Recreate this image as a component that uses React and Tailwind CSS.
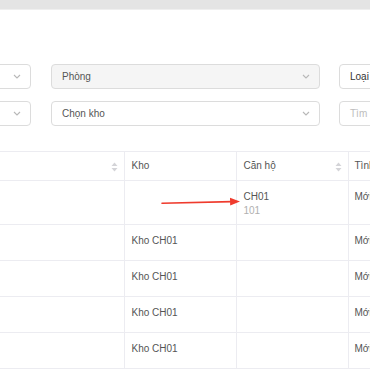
import React from 'react';

function Chevron() {
  return (
    <svg className="w-[8px] h-[5px]" viewBox="0 0 8 5" fill="none" stroke="#b8b8b8" strokeWidth="1.1">
      <path d="M1 1l3 3 3-3" />
    </svg>
  );
}

function SortIcon() {
  return (
    <svg className="absolute right-[6px] top-[10px] w-[7px] h-[10px]" viewBox="0 0 7 10" fill="#d4d4d8">
      <path d="M3.5 0.5L6.5 4H0.5z" />
      <path d="M3.5 9.5L6.5 6H0.5z" />
    </svg>
  );
}

function Select({ className, text, disabled }) {
  return (
    <div
      className={`h-[25px] shrink-0 flex items-center justify-between rounded-[4px] border border-[#dcdcdc] pl-[10px] pr-[9px] ${
        disabled ? 'bg-[#f5f5f5]' : 'bg-white'
      } ${className}`}
    >
      <span className="text-[#555]">{text}</span>
      <Chevron />
    </div>
  );
}

const rows = [
  { kho: '', can: 'CH01', sub: '101', tinh: 'Mới', first: true },
  { kho: 'Kho CH01', can: '', tinh: 'Mới' },
  { kho: 'Kho CH01', can: '', tinh: 'Mới' },
  { kho: 'Kho CH01', can: '', tinh: 'Mới' },
  { kho: 'Kho CH01', can: '', tinh: 'Mới' },
];

export default function App() {
  return (
    <div
      className="relative w-[370px] h-[370px] overflow-hidden bg-white text-[10px] leading-[14px]"
      style={{ fontFamily: '"Liberation Sans", Arial, sans-serif' }}
    >
      <div className="h-[10px] bg-[#e4e4e4] border-b border-[#efefef]" />

      <div className="pt-[54px] ml-[-100px]">
        <div className="flex gap-[20px]">
          <Select className="w-[131px]" />
          <Select className="w-[269px]" text="Phòng" disabled />
          <div className="h-[25px] w-[120px] shrink-0 -ml-[1px] flex items-center rounded-[4px] border border-[#dcdcdc] px-[10px] text-[#333]">
            Loại
          </div>
        </div>
        <div className="flex gap-[20px] mt-[12px]">
          <Select className="w-[131px]" />
          <Select className="w-[269px]" text="Chọn kho" />
          <div className="h-[25px] w-[120px] shrink-0 -ml-[1px] flex items-center rounded-[4px] border border-[#dcdcdc] px-[10px] text-[#bdbdbd]">
            Tìm kiếm
          </div>
        </div>
      </div>

      <div className="relative mt-[25px]">
        <table className="ml-[-100px] w-[580px] table-fixed border-collapse text-[#555]">
          <colgroup>
            <col className="w-[224px]" />
            <col className="w-[112px]" />
            <col className="w-[112px]" />
            <col className="w-[132px]" />
          </colgroup>
          <thead>
            <tr className="h-[29px] border-t border-b border-[#ececf1]">
              <th className="relative border-r border-[#ececf1] font-normal text-left px-[7px]">
                <SortIcon />
              </th>
              <th className="relative border-r border-[#ececf1] font-normal text-left px-[7px]">Kho</th>
              <th className="relative border-r border-[#ececf1] font-normal text-left px-[7px]">
                Căn hộ
                <SortIcon />
              </th>
              <th className="relative font-normal text-left px-[6px]">Tình trạng</th>
            </tr>
          </thead>
          <tbody>
            {rows.map((r, i) => (
              <tr key={i} className={`border-b border-[#ececf1] ${r.first ? 'h-[44px]' : 'h-[36px]'}`}>
                <td className="border-r border-[#ececf1]" />
                <td className="border-r border-[#ececf1] align-top pt-[9px] px-[7px]">{r.kho}</td>
                <td className="border-r border-[#ececf1] align-top pt-[9px] px-[7px]">
                  {r.can && <div>{r.can}</div>}
                  {r.sub && <div className="text-[#b0b0b0]">{r.sub}</div>}
                </td>
                <td className="align-top pt-[9px] px-[6px]">{r.tinh}</td>
              </tr>
            ))}
          </tbody>
        </table>

        <svg className="absolute left-[160px] top-[45px] w-[82px] h-[12px]" viewBox="0 0 82 12" fill="none">
          <path d="M2 7.2L72 5.6" stroke="#ef3b2d" strokeWidth="1.6" strokeLinecap="round" />
          <path d="M70 1.8L80 5.4 70.2 9.4z" fill="#ef3b2d" />
        </svg>
      </div>
    </div>
  );
}
